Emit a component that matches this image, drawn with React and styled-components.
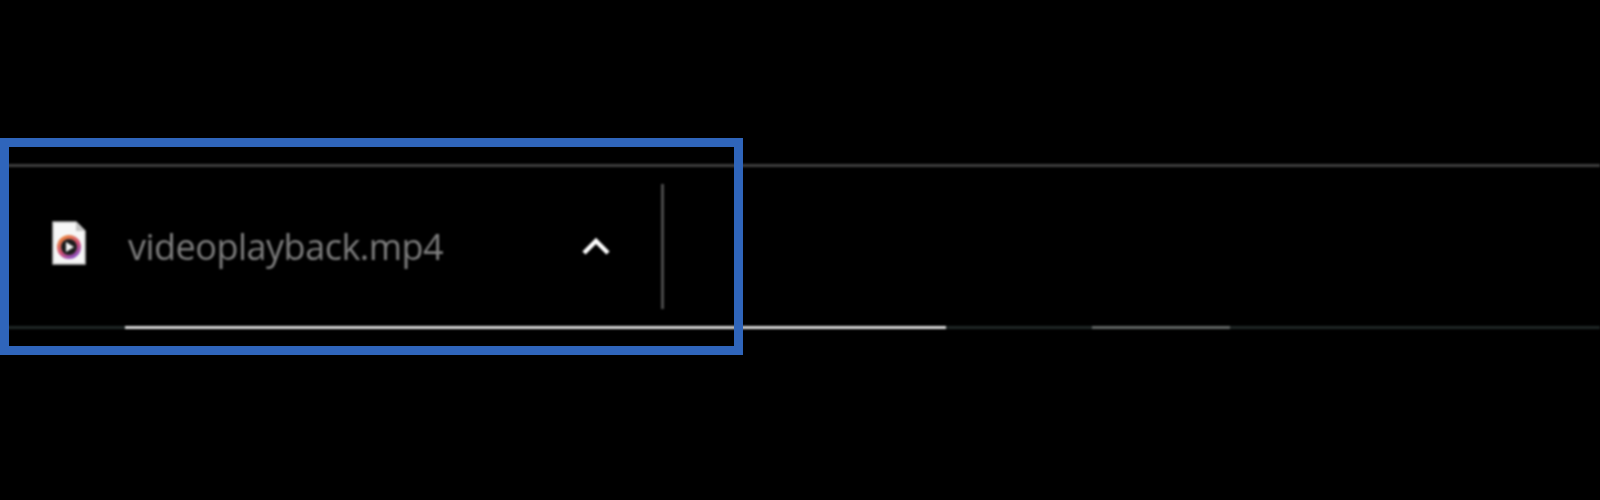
import React from 'react';
import styled, { createGlobalStyle } from 'styled-components';

const GlobalStyle = createGlobalStyle`
  html, body {
    margin: 0;
    padding: 0;
    background: #000;
  }
`;

const Page = styled.div`
  position: relative;
  width: 1600px;
  height: 500px;
  overflow: hidden;
  background: #000;
  padding-top: 164px;
  box-sizing: border-box;
`;

const Shelf = styled.div`
  display: flex;
  flex-direction: column;
  height: 162px;
  border-top: 3px solid #3e3e3e;
  box-sizing: content-box;
  filter: blur(0.8px);
`;

const Row = styled.div`
  flex: 1;
  display: flex;
  align-items: center;
  padding-left: 52px;
`;

const FileIcon = styled.svg`
  width: 34px;
  height: 44px;
  flex: none;
  margin-bottom: 7px;
`;

const FileName = styled.span`
  margin-left: 42px;
  width: 453px;
  font-family: "Open Sans", "Noto Sans", sans-serif;
  font-size: 36px;
  letter-spacing: -0.5px;
  line-height: 44px;
  color: #7d7d7d;
  flex: none;
`;

const Chevron = styled.svg`
  width: 30px;
  height: 20px;
  flex: none;
  margin-bottom: 2px;
`;

const Divider = styled.div`
  width: 3px;
  height: 125px;
  margin-left: 50px;
  background: #4a4a4a;
  flex: none;
`;

const Track = styled.div`
  display: flex;
  height: 3px;
`;

const Segment = styled.div`
  width: ${(p) => p.$width}px;
  flex: ${(p) => (p.$width ? 'none' : 1)};
  background: ${(p) => p.$color};
`;

const Highlight = styled.div`
  position: absolute;
  left: 0;
  top: 138px;
  width: 743px;
  height: 217px;
  box-sizing: border-box;
  border: 9px solid #2f65bb;
`;

const segments = [
  { width: 125, color: '#1f2726' },
  { width: 821, color: '#dcdcdc' },
  { width: 146, color: '#1f2726' },
  { width: 138, color: '#636766' },
  { color: '#1f2726' },
];

export default function App() {
  return (
    <Page>
      <GlobalStyle />
      <Shelf>
        <Row>
          <FileIcon viewBox="0 0 34 44">
            <defs>
              <linearGradient id="ring" x1="0.2" y1="0" x2="0.8" y2="1">
                <stop offset="0" stopColor="#ee8a35" />
                <stop offset="0.55" stopColor="#d0507a" />
                <stop offset="1" stopColor="#7a4fd0" />
              </linearGradient>
            </defs>
            <path d="M1 1h23l9 9v33H1z" fill="#f6f6f6" stroke="#c4c4c4" strokeWidth="1.5" />
            <path d="M24 1v9h9z" fill="#c4c4c4" />
            <circle cx="17" cy="26" r="12" fill="url(#ring)" />
            <circle cx="17" cy="26" r="8" fill="#1c1c1c" />
            <path d="M14 21l8 5-8 5z" fill="#f0f0f0" />
          </FileIcon>
          <FileName>videoplayback.mp4</FileName>
          <Chevron viewBox="0 0 30 20">
            <polyline points="3,17 15,5 27,17" fill="none" stroke="#ffffff" strokeWidth="4.5" />
          </Chevron>
          <Divider />
        </Row>
        <Track>
          {segments.map((s, i) => (
            <Segment key={i} $width={s.width} $color={s.color} />
          ))}
        </Track>
      </Shelf>
      <Highlight />
    </Page>
  );
}
